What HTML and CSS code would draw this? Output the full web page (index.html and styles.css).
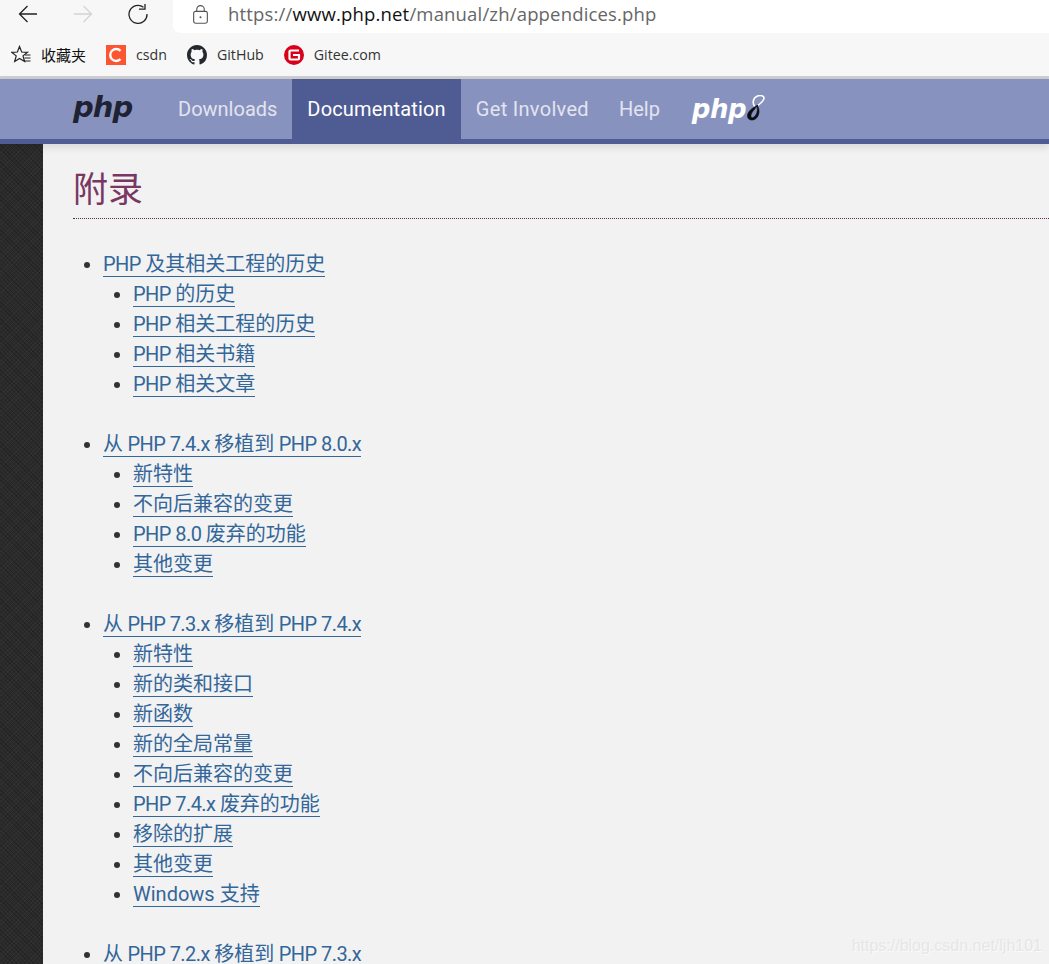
FILE: index.html
```html
<!DOCTYPE html>
<html lang="zh">
<head>
<meta charset="utf-8">
<title>附录</title>
<link rel="stylesheet" href="styles.css">
</head>
<body>
<div class="browser">
  <div class="toolbar">
    <div class="nav-btns">
      <svg class="tb-icon" viewBox="0 0 20 20"><path d="M19 10H1.500M9.500 2 1.500 10l8 8" fill="none" stroke="#222" stroke-width="1.300"/></svg>
      <svg class="tb-icon" viewBox="0 0 20 20"><path d="M1 10h17.500M10.500 2l8 8-8 8" fill="none" stroke="#d4d4d4" stroke-width="1.300"/></svg>
      <svg class="tb-icon" viewBox="0 0 20 20"><path d="M15.500 3.200A9 9 0 1 0 19 10" fill="none" stroke="#222" stroke-width="1.300"/><path d="M12.500 5.700h6V0" fill="none" stroke="#222" stroke-width="1.300" transform="translate(-1.500 -.5)"/></svg>
    </div>
    <div class="urlbar">
      <svg class="lock" viewBox="0 0 16 20"><rect x=".7" y="6.700" width="14.600" height="12.600" rx="2" fill="none" stroke="#555" stroke-width="1.200"/><path d="M4 7V4.500a4 4 0 0 1 8 0V7" fill="none" stroke="#555" stroke-width="1.200"/><circle cx="8" cy="13" r="1.100" fill="#555"/></svg>
      <span class="url">https://<b class="host">www.php.net</b>/manual/zh/appendices.php</span>
    </div>
  </div>
  <div class="bookmarks">
    <a class="bm fav">
      <svg class="bm-icon" viewBox="0 0 20 20"><path d="M8.500 1.500 10.700 7l5.800.3-4.500 3.600 1.600 5.600-5.100-3.100-4.800 3.100 1.500-5.600L.6 7.300 6.400 7z" fill="none" stroke="#222" stroke-width="1.200"/><path d="M14 10h5.500M13.500 13h6M13.500 16h6" stroke="#222" stroke-width="1.200"/></svg>
      <span class="bm-cn">收藏夹</span>
    </a>
    <a class="bm">
      <svg class="bm-icon" viewBox="0 0 20 20"><rect width="20" height="20" fill="#fc5531"/><path d="M14.500 5.800A6 6 0 1 0 14.500 14.200" fill="none" stroke="#fff" stroke-width="2.400"/></svg>
      <span>csdn</span>
    </a>
    <a class="bm">
      <svg class="bm-icon" viewBox="0 0 16 16"><path fill="#24292e" d="M8 0C3.580 0 0 3.580 0 8c0 3.540 2.290 6.530 5.470 7.590.4.070.55-.17.55-.38 0-.19-.01-.82-.01-1.490-2.010.37-2.530-.49-2.690-.94-.09-.23-.48-.94-.82-1.130-.28-.15-.68-.52-.01-.53.63-.01 1.080.58 1.230.82.72 1.210 1.870.87 2.330.66.070-.52.28-.87.51-1.070-1.780-.2-3.640-.89-3.640-3.950 0-.87.31-1.590.82-2.150-.08-.2-.36-1.020.08-2.120 0 0 .67-.21 2.200.82.64-.18 1.320-.27 2-.27.68 0 1.360.09 2 .27 1.530-1.040 2.200-.82 2.200-.82.44 1.100.16 1.920.08 2.120.51.56.82 1.270.82 2.150 0 3.070-1.870 3.750-3.650 3.950.29.25.54.73.54 1.480 0 1.070-.01 1.930-.01 2.200 0 .21.15.46.55.38A8.013 8.013 0 0 0 16 8c0-4.420-3.580-8-8-8z"/></svg>
      <span>GitHub</span>
    </a>
    <a class="bm">
      <svg class="bm-icon" viewBox="0 0 20 20"><circle cx="10" cy="10" r="10" fill="#d9001b"/><path d="M15 5.500H6.500a1 1 0 0 0-1 1v7a1 1 0 0 0 1 1H14a1 1 0 0 0 1-1V10H9" fill="none" stroke="#fff" stroke-width="2.200"/></svg>
      <span>Gitee.com</span>
    </a>
  </div>
</div>

<nav class="site-nav">
  <a class="brand">php</a>
  <a class="nav-item">Downloads</a>
  <a class="nav-item active">Documentation</a>
  <a class="nav-item wide">Get Involved</a>
  <a class="nav-item">Help</a>
  <a class="php8">
    <span class="php8-text">php</span>
    <svg class="php8-eight" viewBox="0 0 20 26"><path d="M9 12C6 8 7 3 11 1.200 14 0 18 .5 18 3c0 3-4 6-7 8" fill="none" stroke="#fff" stroke-width="1.600"/><path d="M12 10C6 13 1 17 1.500 21.500 2 25.500 7 26 10 23.500c3-2.500 4.500-8.500 1-13.500 1 5 0 10-3 12-2 1.500-3.500.5-3-2 .5-3 4-6 7-10z" fill="#0c0c14" stroke="#0c0c14" stroke-width=".6"/></svg>
  </a>
</nav>

<div class="page">
  <aside class="sidebar"></aside>
  <main class="content">
    <h1 class="title">附录</h1>
    <ul class="toc">
      <li><a><span class="lat">PHP </span>及其相关工程的历史</a>
        <ul>
          <li><a><span class="lat">PHP </span>的历史</a></li>
          <li><a><span class="lat">PHP </span>相关工程的历史</a></li>
          <li><a><span class="lat">PHP </span>相关书籍</a></li>
          <li><a><span class="lat">PHP </span>相关文章</a></li>
        </ul>
      </li>
      <li><a>从<span class="lat"> PHP 7.4.x </span>移植到<span class="lat"> PHP 8.0.x</span></a>
        <ul>
          <li><a>新特性</a></li>
          <li><a>不向后兼容的变更</a></li>
          <li><a><span class="lat">PHP 8.0 </span>废弃的功能</a></li>
          <li><a>其他变更</a></li>
        </ul>
      </li>
      <li><a>从<span class="lat"> PHP 7.3.x </span>移植到<span class="lat"> PHP 7.4.x</span></a>
        <ul>
          <li><a>新特性</a></li>
          <li><a>新的类和接口</a></li>
          <li><a>新函数</a></li>
          <li><a>新的全局常量</a></li>
          <li><a>不向后兼容的变更</a></li>
          <li><a><span class="lat">PHP 7.4.x </span>废弃的功能</a></li>
          <li><a>移除的扩展</a></li>
          <li><a>其他变更</a></li>
          <li><a>Windows 支持</a></li>
        </ul>
      </li>
      <li><a>从<span class="lat"> PHP 7.2.x </span>移植到<span class="lat"> PHP 7.3.x</span></a></li>
    </ul>
  </main>
</div>
<div class="watermark">https://blog.csdn.net/ljh101</div>
</body>
</html>
```

FILE: styles.css
```css
html, body {
  margin: 0;
  padding: 0;
  height: 964px;
  overflow: hidden;
}
body {
  position: relative;
  background: #f2f2f2;
  font-family: "Roboto", "Noto Sans CJK SC", sans-serif;
  color: #333;
}

/* browser chrome */
.browser {
  background: #f7f7f7;
  height: 76px;
  border-bottom: 3px solid #cfcfcf;
}
.toolbar {
  display: flex;
  height: 33px;
}
.nav-btns {
  display: flex;
  align-items: center;
  gap: 35px;
  padding: 0 25px 5px 18px;
}
.tb-icon {
  width: 20px;
  height: 20px;
}
.urlbar {
  flex: 1;
  display: flex;
  align-items: center;
  gap: 20px;
  padding: 0 0 5px 20px;
  background: #fff;
  border-bottom-left-radius: 8px;
}
.lock {
  width: 15px;
  height: 19px;
}
.url {
  font: 18.500px/24px "Open Sans", sans-serif;
  letter-spacing: .17px;
  color: #666;
}
.host {
  font-weight: 400;
  color: #111;
}
.bookmarks {
  display: flex;
  align-items: center;
  gap: 20px;
  height: 43px;
  padding-left: 11px;
}
.bm {
  display: flex;
  align-items: center;
  gap: 10px;
  font: 14.200px/20px "Open Sans", sans-serif;
  color: #333;
}
.bm-icon {
  width: 20px;
  height: 20px;
}
.bm-cn {
  font-family: "Noto Sans CJK SC", sans-serif;
  font-size: 15px;
  color: #111;
}

/* site nav */
.site-nav {
  display: flex;
  height: 60px;
  padding-left: 73px;
  background: #8892bf;
  border-bottom: 5px solid #4f5b93;
  box-shadow: 0 3px 8px rgba(0, 0, 0, .12);
  position: relative;
  z-index: 1;
  font-size: 20px;
  line-height: 61px;
}
.brand {
  width: 90px;
  font: italic 700 29px/57px "DejaVu Sans", sans-serif;
  letter-spacing: -1px;
  color: #1e2233;
}
.nav-item {
  padding: 0 15px;
  color: #e2e4ef;
}
.nav-item.active {
  background: #4f5b93;
  color: #fff;
  letter-spacing: .15px;
}
.nav-item.wide {
  letter-spacing: .3px;
}
.php8 {
  display: flex;
  align-items: center;
  margin-left: 17px;
}
.php8-text {
  font: italic 700 26px/30px "DejaVu Sans", sans-serif;
  letter-spacing: -.5px;
  color: #fff;
}
.php8-eight {
  width: 20px;
  height: 26px;
  margin-bottom: 3px;
}

/* page */
.page {
  display: flex;
  height: 820px;
}
.sidebar {
  width: 43px;
  flex: none;
  background-color: #2b2b2b;
  background-image:
    repeating-linear-gradient(45deg, rgba(0, 0, 0, .18) 0 1px, transparent 1px 3px),
    repeating-linear-gradient(-45deg, rgba(255, 255, 255, .03) 0 1px, transparent 1px 3px);
}
.content {
  flex: 1;
  padding: 20px 0 0 30px;
}
.title {
  margin: 0 0 30px;
  height: 52px;
  padding-top: 2px;
  border-bottom: 1px dotted #5a2a4a;
  font-size: 35px;
  font-weight: 400;
  line-height: 50px;
  color: #793862;
}
.toc {
  margin: 0;
  padding: 0 0 0 30px;
  font-size: 20px;
  line-height: 30px;
  list-style: disc;
}
.toc > li {
  margin-bottom: 30px;
}
.toc ul {
  margin: 0;
  padding-left: 30px;
  list-style: disc;
}
.toc a {
  color: #369;
  border-bottom: 1px solid #369;
}
.lat {
  letter-spacing: -.55px;
}

.watermark {
  position: absolute;
  right: 7px;
  bottom: 7px;
  font: 16px/22px "Liberation Sans", sans-serif;
  color: #e6e6e6;
  text-shadow: 1px 1px 0 #fafafa;
}
```
